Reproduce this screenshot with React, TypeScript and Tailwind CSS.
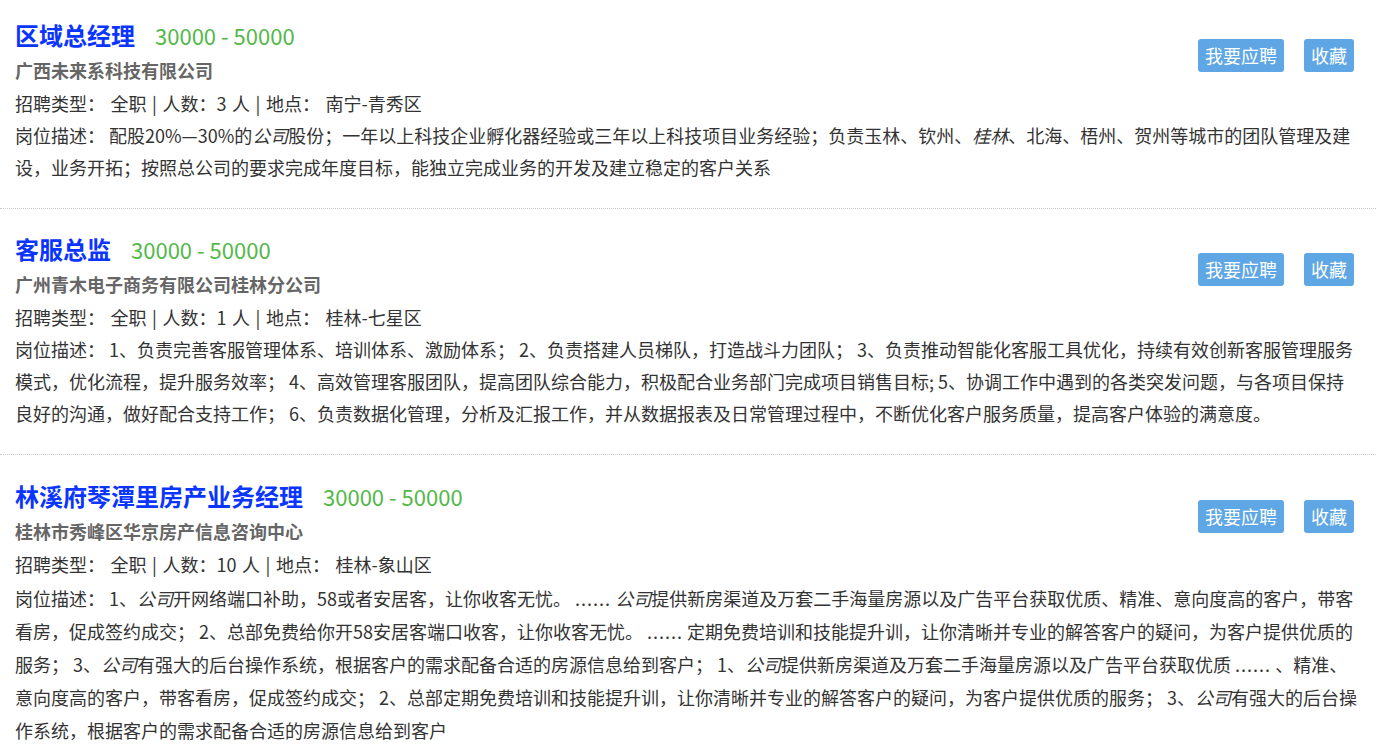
import React from "react";

type Job = {
  title: string;
  company: string;
  count: string;
  place: string;
  pad: string;
  lead: string;
  desc: React.ReactNode;
};

const I = ({ children }: { children: React.ReactNode }) => <i>{children}</i>;
const D = () => <span className="tracking-[1px]">......</span>;

const jobs: Job[] = [
  {
    title: "区域总经理",
    company: "广西未来系科技有限公司",
    count: "3",
    place: "南宁-青秀区",
    pad: "pt-[15px]",
    lead: "leading-8",
    desc: (
      <>
        配股20%—30%的<I>公司</I>股份；一年以上科技企业孵化器经验或三年以上科技项目业务经验；负责玉林、钦州、<I>桂林</I>、北海、梧州、贺州等城市的团队管理及建设，业务开拓；按照总公司的要求完成年度目标，能独立完成业务的开发及建立稳定的客户关系
      </>
    ),
  },
  {
    title: "客服总监",
    company: "广州青木电子商务有限公司桂林分公司",
    count: "1",
    place: "桂林-七星区",
    pad: "pt-5",
    lead: "leading-8",
    desc: (
      <>
        1、负责完善客服管理体系、培训体系、激励体系； 2、负责搭建人员梯队，打造战斗力团队； 3、负责推动智能化客服工具优化，持续有效创新客服管理服务模式，优化流程，提升服务效率； 4、高效管理客服团队，提高团队综合能力，积极配合业务部门完成项目销售目标; 5、协调工作中遇到的各类突发问题，与各项目保持良好的沟通，做好配合支持工作； 6、负责数据化管理，分析及汇报工作，并从数据报表及日常管理过程中，不断优化客户服务质量，提高客户体验的满意度。
      </>
    ),
  },
  {
    title: "林溪府琴潭里房产业务经理",
    company: "桂林市秀峰区华京房产信息咨询中心",
    count: "10",
    place: "桂林-象山区",
    pad: "pt-[21px]",
    lead: "leading-[33px] mt-[2px]",
    desc: (
      <>
        1、<I>公司</I>开网络端口补助，58或者安居客，让你收客无忧。 <D /> <I>公司</I>提供新房渠道及万套二手海量房源以及广告平台获取优质、精准、意向度高的客户，带客看房，促成签约成交； 2、总部免费给你开58安居客端口收客，让你收客无忧。 <D /> 定期免费培训和技能提升训，让你清晰并专业的解答客户的疑问，为客户提供优质的服务； 3、<I>公司</I>有强大的后台操作系统，根据客户的需求配备合适的房源信息给到客户； 1、<I>公司</I>提供新房渠道及万套二手海量房源以及广告平台获取优质 <D /> 、精准、意向度高的客户，带客看房，促成签约成交； 2、总部定期免费培训和技能提升训，让你清晰并专业的解答客户的疑问，为客户提供优质的服务； 3、<I>公司</I>有强大的后台操作系统，根据客户的需求配备合适的房源信息给到客户
      </>
    ),
  },
];

export default function App() {
  return (
    <div className="w-[1376px] bg-white font-['Noto_Sans_CJK_SC','Microsoft_YaHei',sans-serif] text-[18px] text-[#333]">
      {jobs.map((job, idx) => (
        <div
          key={idx}
          className={
            job.pad +
            " border-b border-dotted border-[#ccc] pl-[15px] pr-[15px] pb-[25px]"
          }
        >
          <div className="float-right mt-[24px] mr-[7px] flex gap-5">
            <button className="h-[33px] rounded-[3px] bg-[#5ea6e4] px-[7px] text-[18px] leading-[33px] text-white">
              我要应聘
            </button>
            <button className="h-[33px] rounded-[3px] bg-[#5ea6e4] px-[7px] text-[18px] leading-[33px] text-white">
              收藏
            </button>
          </div>
          <div className="flex h-10 items-center gap-5">
            <span className="text-[24px] font-bold text-[#0a35ff]">{job.title}</span>
            <span className="text-[22px] text-[#52b848]">30000 - 50000</span>
          </div>
          <div className="text-[18px] font-bold leading-[30px] text-[#666]">{job.company}</div>
          <div className="mt-[2px] leading-8 [word-spacing:1.5px]">
            招聘类型： 全职 | 人数：{job.count} 人 | 地点： {job.place}
          </div>
          <div className={job.lead}>岗位描述： {job.desc}</div>
        </div>
      ))}
    </div>
  );
}
